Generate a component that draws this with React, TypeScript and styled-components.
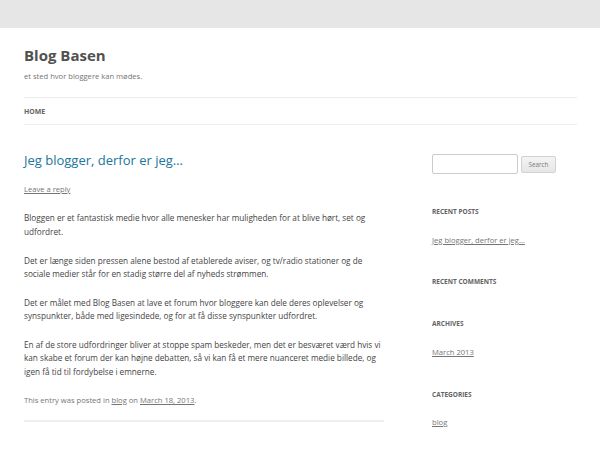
import React from "react";
import styled, { createGlobalStyle } from "styled-components";

const Global = createGlobalStyle`
  html, body { margin: 0; padding: 0; }
  body {
    background: #e6e6e6;
    font-family: "Open Sans", "Liberation Sans", sans-serif;
    color: #444;
  }
`;

const Page = styled.div`
  margin-top: 28px;
  background: #fff;
  min-height: calc(100vh - 28px);
  padding: 0 23px 0 24px;
  box-sizing: border-box;
`;

const Header = styled.header`
  padding-top: 17px;
`;

const SiteTitle = styled.h1`
  margin: 0;
  font-size: 15px;
  line-height: 20px;
  font-weight: 700;
  color: #515151;
`;

const Tagline = styled.h2`
  margin: 6px 0 0;
  font-size: 7.6px;
  line-height: 10px;
  font-weight: 400;
  color: #757575;
`;

const Nav = styled.nav`
  margin-top: 16px;
  border-top: 1px solid #ededed;
  border-bottom: 1px solid #ededed;
  height: 26px;
  display: flex;
  align-items: center;
`;

const NavItem = styled.a`
  font-size: 6.9px;
  font-weight: 700;
  color: #636363;
  text-transform: uppercase;
  text-decoration: none;
  line-height: 26px;
  padding-top: 2px;
`;

const Columns = styled.div`
  display: flex;
  justify-content: space-between;
  margin-top: 29px;
`;

const Main = styled.main`
  width: 360px;
`;

const Article = styled.article`
  padding-bottom: 13px;
  border-bottom: 2px solid #efefef;
`;

const EntryTitle = styled.h2`
  margin: 0;
  font-size: 13px;
  line-height: 13.7px;
  font-weight: 400;
  color: #21759b;
`;

const CommentsLink = styled.div`
  margin-top: 15px;
  font-size: 7.6px;
  line-height: 13.7px;
  color: #757575;
`;

const EntryHeader = styled.header`
  margin-bottom: 15px;
`;

const Para = styled.p`
  margin: 0 0 14.5px;
  font-size: 8.2px;
  line-height: 13.8px;
  color: #444;
`;

const Meta = styled.footer`
  font-size: 7.6px;
  line-height: 13.7px;
  color: #757575;
`;

const GrayLink = styled.a`
  color: #757575;
  text-decoration: underline;
`;

const Sidebar = styled.aside`
  width: 145px;
`;

const SearchForm = styled.form`
  display: flex;
  align-items: center;
  gap: 3px;
  margin-bottom: 31px;
`;

const SearchInput = styled.input`
  width: 86px;
  height: 20px;
  box-sizing: border-box;
  border: 1px solid #ccc;
  border-radius: 2px;
  padding: 0 3px;
  font-family: inherit;
  font-size: 7px;
  background: #fff;
`;

const SearchButton = styled.button`
  width: 35px;
  height: 17px;
  box-sizing: border-box;
  padding: 0;
  border: 1px solid #d2d2d2;
  border-radius: 2px;
  background: linear-gradient(to bottom, #f4f4f4, #e6e6e6);
  color: #7c7c7c;
  font-family: inherit;
  font-size: 6.3px;
  line-height: 15px;
`;

const Widget = styled.section`
  margin-bottom: 28px;
`;

const WidgetTitle = styled.h3<{ $empty?: boolean }>`
  margin: 0 0 ${(p) => (p.$empty ? 0 : 15)}px;
  font-size: 6.5px;
  line-height: 13.7px;
  font-weight: 700;
  text-transform: uppercase;
  color: #636363;
`;

const WidgetList = styled.ul`
  list-style: none;
  margin: 0;
  padding: 0;
`;

const WidgetItem = styled.li`
  font-size: 7.6px;
  line-height: 13.7px;
  color: #757575;
`;

const widgets: { title: string; items: string[] }[] = [
  { title: "Recent Posts", items: ["Jeg blogger, derfor er jeg…"] },
  { title: "Recent Comments", items: [] },
  { title: "Archives", items: ["March 2013"] },
  { title: "Categories", items: ["blog"] },
];

const paragraphs = [
  "Bloggen er et fantastisk medie hvor alle menesker har muligheden for at blive hørt, set og udfordret.",
  "Det er længe siden pressen alene bestod af etablerede aviser, og tv/radio stationer og de sociale medier står for en stadig større del af nyheds strømmen.",
  "Det er målet med Blog Basen at lave et forum hvor bloggere kan dele deres oplevelser og synspunkter, både med ligesindede, og for at få disse synspunkter udfordret.",
  "En af de store udfordringer bliver at stoppe spam beskeder, men det er besværet værd hvis vi kan skabe et forum der kan højne debatten, så vi kan få et mere nuanceret medie billede, og igen få tid til fordybelse i emnerne.",
];

export default function App() {
  return (
    <>
      <Global />
      <Page>
        <Header>
          <SiteTitle>Blog Basen</SiteTitle>
          <Tagline>et sted hvor bloggere kan mødes.</Tagline>
          <Nav>
            <NavItem href="#">Home</NavItem>
          </Nav>
        </Header>
        <Columns>
          <Main>
            <Article>
              <EntryHeader>
                <EntryTitle>Jeg blogger, derfor er jeg…</EntryTitle>
                <CommentsLink>
                  <GrayLink href="#">Leave a reply</GrayLink>
                </CommentsLink>
              </EntryHeader>
              {paragraphs.map((p) => (
                <Para key={p}>{p}</Para>
              ))}
              <Meta>
                This entry was posted in <GrayLink href="#">blog</GrayLink> on{" "}
                <GrayLink href="#">March 18, 2013</GrayLink>.
              </Meta>
            </Article>
          </Main>
          <Sidebar>
            <SearchForm onSubmit={(e) => e.preventDefault()}>
              <SearchInput type="text" />
              <SearchButton type="submit">Search</SearchButton>
            </SearchForm>
            {widgets.map((w) => (
              <Widget key={w.title}>
                <WidgetTitle $empty={w.items.length === 0}>{w.title}</WidgetTitle>
                {w.items.length > 0 && (
                  <WidgetList>
                    {w.items.map((it) => (
                      <WidgetItem key={it}>
                        <GrayLink href="#">{it}</GrayLink>
                      </WidgetItem>
                    ))}
                  </WidgetList>
                )}
              </Widget>
            ))}
          </Sidebar>
        </Columns>
      </Page>
    </>
  );
}
